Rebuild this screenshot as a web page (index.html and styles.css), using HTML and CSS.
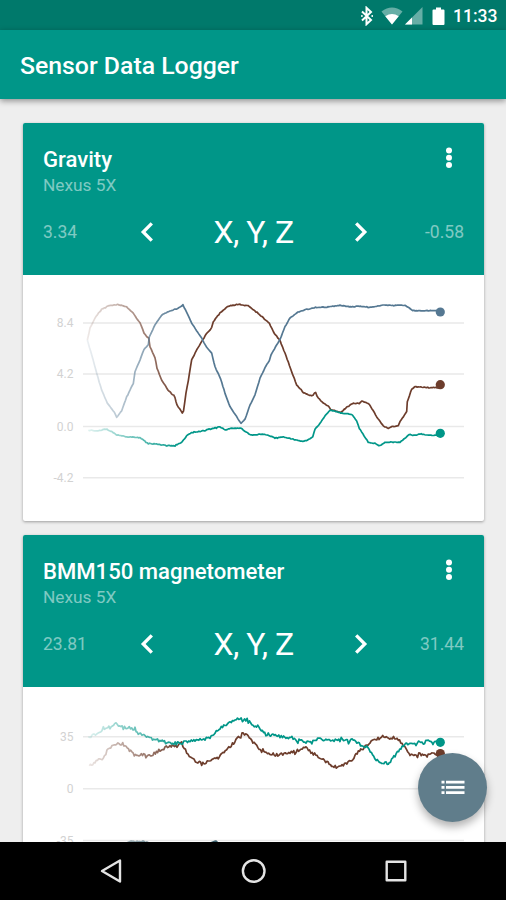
FILE: index.html
```html
<!DOCTYPE html>
<html lang="en">

<head>
  <meta charset="UTF-8">
  <title>Sensor Data Logger</title>
  <link rel="stylesheet" href="styles.css">
</head>

<body>

  <div class="status-bar">
    <svg class="bluetooth" width="14" height="20" viewBox="0 0 14 20">
      <path d="M2 5.5l9 8.5-4.5 4.2V1.8L11 6l-9 8.5M1.2 10h1.4M11.5 10h1.4" fill="none" stroke="#fff" stroke-width="2" />
    </svg>
    <svg class="wifi" width="22" height="18" viewBox="0 0 22 18">
      <path d="M11 17.5L.5 4.5Q11-3.5 21.5 4.5z" fill="#fff" opacity=".4" />
      <path d="M11 17.5L4.3 9.3Q11 4.5 17.7 9.3z" fill="#fff" />
    </svg>
    <svg class="signal" width="18" height="18" viewBox="0 0 18 18">
      <path d="M17.5 0v17.5H0z" fill="#fff" opacity=".4" />
      <path d="M7 10.5v7H0z" fill="#fff" />
    </svg>
    <svg class="battery" width="13" height="19" viewBox="0 0 13 19">
      <path d="M4 .5h5v2h2.5q1 0 1 1V17q0 1-1 1h-10q-1 0-1-1V3.5q0-1 1-1H4z" fill="#fff" />
    </svg>
    <span class="clock">11:33</span>
  </div>

  <header class="app-bar">
    <h1>Sensor Data Logger</h1>
  </header>

  <main>
    <section class="card">
      <div class="card-header">
        <div class="title-row">
          <div>
            <h2>Gravity</h2>
            <p class="device">Nexus 5X</p>
          </div>
          <svg class="more" width="8" height="22" viewBox="0 0 8 22" fill="#fff">
            <circle cx="4" cy="3.5" r="3" />
            <circle cx="4" cy="10.8" r="3" />
            <circle cx="4" cy="18.1" r="3" />
          </svg>
        </div>
        <div class="value-row">
          <span class="value">3.34</span>
          <svg class="arrow" width="14" height="20" viewBox="0 0 14 20">
            <path d="M11.8 1.3L3.2 10l8.6 8.7" />
          </svg>
          <span class="axes">X, Y, Z</span>
          <svg class="arrow" width="14" height="20" viewBox="0 0 14 20">
            <path d="M2.2 1.3l8.6 8.7-8.6 8.7" />
          </svg>
          <span class="value right">-0.58</span>
        </div>
      </div>
      <svg class="chart" id="gravity" width="461" height="246" viewBox="23 275 461 246"></svg>
    </section>

    <section class="card">
      <div class="card-header">
        <div class="title-row">
          <div>
            <h2>BMM150 magnetometer</h2>
            <p class="device">Nexus 5X</p>
          </div>
          <svg class="more" width="8" height="22" viewBox="0 0 8 22" fill="#fff">
            <circle cx="4" cy="3.5" r="3" />
            <circle cx="4" cy="10.8" r="3" />
            <circle cx="4" cy="18.1" r="3" />
          </svg>
        </div>
        <div class="value-row">
          <span class="value">23.81</span>
          <svg class="arrow" width="14" height="20" viewBox="0 0 14 20">
            <path d="M11.8 1.3L3.2 10l8.6 8.7" />
          </svg>
          <span class="axes">X, Y, Z</span>
          <svg class="arrow" width="14" height="20" viewBox="0 0 14 20">
            <path d="M2.2 1.3l8.6 8.7-8.6 8.7" />
          </svg>
          <span class="value right">31.44</span>
        </div>
      </div>
      <svg class="chart" id="magnetometer" width="461" height="246" viewBox="23 687 461 246"></svg>
    </section>

    <button class="fab" aria-label="Sensors">
      <svg width="24" height="15" viewBox="0 0 24 15" fill="#fff">
        <path d="M.5 .7h3v2.8h-3zM5 .7h18.5v2.8H5zM.5 6h3v2.8h-3zM5 6h18.5v2.8H5zM.5 11.3h3v2.8h-3zM5 11.3h18.5v2.8H5z" />
      </svg>
    </button>
  </main>

  <nav class="nav-bar">
    <svg width="24" height="26" viewBox="0 0 24 26">
      <path d="M22 2.5v21L4 13z" />
    </svg>
    <svg width="26" height="26" viewBox="0 0 26 26">
      <circle cx="13.7" cy="13" r="10.8" />
    </svg>
    <svg width="24" height="24" viewBox="0 0 24 24">
      <rect x="2.7" y="2.7" width="18.6" height="18.6" />
    </svg>
  </nav>

  <script src="chart.js"></script>

</body>

</html>
```
FILE: styles.css
```css
* {
  box-sizing: border-box;
}

body {
  margin: 0;
  height: 900px;
  display: flex;
  flex-direction: column;
  overflow: hidden;
  background: #eeeeee;
  color: #fff;
  font-family: Roboto, "Liberation Sans", sans-serif;
}

h1,
h2,
p {
  margin: 0;
}

.status-bar {
  height: 30px;
  flex: none;
  display: flex;
  align-items: center;
  justify-content: flex-end;
  padding: 2px 9px 0 0;
  background: #00796b;
}

.bluetooth {
  margin-right: 7px;
}

.wifi {
  margin-right: 2px;
}

.signal {
  margin-right: 9px;
}

.battery {
  margin-right: 8px;
}

.clock {
  width: 44px;
  font-size: 17.5px;
  font-weight: 500;
  line-height: 28px;
}

.app-bar {
  position: relative;
  height: 69px;
  flex: none;
  padding-left: 20px;
  background: #009688;
  box-shadow: 0 2px 6px rgba(0, 0, 0, 0.4);
  z-index: 1;
}

h1 {
  font-size: 24.8px;
  font-weight: 500;
  line-height: 71px;
}

main {
  position: relative;
  flex: 1;
  min-height: 0;
  overflow: hidden;
  padding: 24px 22px 0 23px;
}

.card {
  height: 398px;
  margin-bottom: 14px;
  border-radius: 2px;
  overflow: hidden;
  background: #fff;
  box-shadow: 0 1px 3px rgba(0, 0, 0, 0.35);
}

.card-header {
  height: 152px;
  padding: 23px 20px 0;
  background: #009688;
}

.title-row {
  display: flex;
  justify-content: space-between;
}

h2 {
  font-size: 22.1px;
  font-weight: 500;
  line-height: 26px;
}

.device {
  font-size: 17.3px;
  line-height: 26px;
  color: rgba(255, 255, 255, 0.5);
}

.more {
  margin: 1px 11px 0 0;
}

.value-row {
  height: 40px;
  display: flex;
  align-items: center;
  margin-top: 14px;
}

.value {
  width: 96.5px;
  font-size: 17.5px;
  color: rgba(255, 255, 255, 0.5);
}

.right {
  text-align: right;
}

.arrow {
  fill: none;
  stroke: #fff;
  stroke-width: 3.3;
}

.axes {
  flex: 1;
  font-size: 32px;
  letter-spacing: -0.5px;
  text-align: center;
}

.chart {
  display: block;
}

.grid-line {
  stroke: #e9e9e9;
  stroke-width: 1.6;
}

.grid-label {
  fill: #d2d2d2;
  font-size: 12px;
  text-anchor: end;
}

.series {
  fill: none;
  stroke-width: 1.7;
  stroke-linejoin: round;
}

.fab {
  position: absolute;
  right: 19px;
  bottom: 20px;
  width: 69px;
  height: 69px;
  display: flex;
  align-items: center;
  justify-content: center;
  padding: 0;
  border: none;
  border-radius: 50%;
  background: #607d8b;
  box-shadow: 0 5px 9px rgba(0, 0, 0, 0.3);
}

.nav-bar {
  height: 58px;
  flex: none;
  display: flex;
  align-items: center;
  justify-content: center;
  gap: 118px;
  background: #000;
}

.nav-bar svg {
  fill: none;
  stroke: #e4e4e4;
  stroke-width: 2.4;
  stroke-linejoin: round;
}
```
FILE: chart.js
```js
const SVG_NS = "http://www.w3.org/2000/svg";

const charts = [
  {
    id: "gravity",
    grid: [[323, "8.4"], [374, "4.2"], [426.5, "0.0"], [477.7, "-4.2"]],
    series: [
      {
        color: "#6d3d2c", noise: 0.7, dot: [440.3, 384.7],
        points: "87.3,340 90,328 95,318 101.7,309 108,306 113,305 120,305 126.7,307 133,313 140,323 144,333 148.7,338 150,347 155,358 157,368 161.7,380 168,390 175,397 177,405 182.3,413 183.5,411 186,393 188.3,380 191.7,360 196.7,350 201.7,341.7 206.7,333.3 211.7,328 213.3,321.7 220,313 228.3,306 240,304.5 248.3,305.7 258.3,313.3 269.3,323.3 273.3,331.7 280,340.7 285,353.3 291.7,371.7 296.7,385 303.3,392.7 311.7,396 315.7,392.7 318.3,398.3 323.3,403.3 328.3,406 330.7,409.3 340.7,412.7 346.7,407.3 353.3,403.3 359.3,403.3 362,400.7 369.3,404.3 376.7,416.7 383.3,426 388.3,428.3 391.7,426.7 398.3,426 400,421.7 406.7,411.7 407.3,401.7 411.7,389 416,386.7 430,387.7 440.7,387.5"
      },
      {
        color: "#557892", noise: 0.6, dot: [440.3, 312],
        points: "87.3,340 91.7,355 96.7,373.3 101.7,390 107.3,403.3 113.3,410.7 116.7,417.3 121.7,410.7 126.7,396.7 133.3,383.3 135,371.7 140,360 144,349.3 148.3,345 149.3,336.7 155,325 161.7,315 170,310.7 176.7,309 183,305.3 186.7,311.7 191.7,323.3 201.7,338.3 206.7,347.3 211.7,353.3 215,366.7 220.7,379.3 225,393.3 230,406.7 236.7,416.7 241,423.3 245,419.3 250,405 255,395 260,378.3 265,367.3 269.3,360.7 271,355 280,339.3 285,326.7 290,318.3 296.7,312.7 306.7,309.3 316.7,307.5 326.7,307 340,305.3 351.7,307 358.3,306 369.3,307.3 381.7,305.3 405,305.3 408.3,307.3 412.7,310.7 440,310.7"
      },
      {
        color: "#009688", noise: 0.7, dot: [440.3, 433.3],
        points: "88.3,430.3 98.3,430.7 106,429 111.7,431.7 116.7,435 126.7,436.7 140,437.7 148.3,443.3 163.3,445 175,446 182.3,441.7 186.7,435.7 191.7,432.7 200,431.3 206.7,429.7 220,426.7 225,430 231.7,428.3 241,428.3 250,434.7 255,435 263.3,433.7 275,438 283.3,437 296.7,440 304,441.3 310,439 312.7,436.7 315,429.3 320,423.3 325,416 330,410 341.7,413 351.7,414.3 356.7,420.7 359.3,428.3 368.3,442.3 375,443.3 380,445.7 385,442.3 400,442.3 409.3,434.3 415,435.3 420,433.7 428.3,435.3 440,435.3"
      }
    ]
  },
  {
    id: "magnetometer",
    grid: [[736.7, "35"], [788.7, "0"], [840.5, "-35"]],
    series: [
      {
        color: "#6d3d2c", noise: 3, dot: [440.3, 753.5],
        points: "89.3,765.7 95,762.3 103.3,757.7 108.3,749 116.7,743.3 122.7,744 128.3,749.3 136.7,755 151.7,755 160,750 170,746.7 181.7,743.3 186.7,752.7 191.7,758.3 201.7,764 208.3,761.7 218.3,758 230,746.7 238.3,737.7 245.7,734.3 251.7,740.7 261.7,751.3 276.7,755 290,752.7 306,747.7 313.3,754.3 323.3,760 334,767.7 343.3,765 351.7,760.7 358.3,751 366.7,746 373.3,740 385,736.7 398.3,739.3 403.3,745.7 410,754 420,754.3 440,753.7"
      },
      {
        color: "#009688", noise: 3, dot: [440.3, 742.3],
        points: "88.3,736.7 96.7,734.3 103.3,729.3 110,726 116,723.3 123.3,727.7 131.7,727.7 138.3,733.3 150,738.3 160,740.7 166.7,742.7 180,743.3 190,740.7 200,740 210,737.7 220,728.3 230,722.7 240,717.7 248.3,722.3 260,729 268.3,734.3 280,736.7 296.7,740 308.3,742.7 320,739.3 340,740.3 353.3,740.7 359.3,744 366.7,746.7 375,758.3 381.7,763.3 388.3,763.3 395,756 403.3,746 410,742.3 423.3,742.7 428.3,740.7 440,742.3"
      },
      {
        color: "#3f6370", noise: 1, dot: [440.3, 870],
        points: "88,862 110,852 130,841.5 143,841.5 149,843 170,860 190,862 211,842.5 216,841 220,846 245,862 330,868 440,870"
      }
    ]
  }
];

// fixed seed, so the jitter is the same on every load
let seed = 7;
function random() {
  seed = (seed * 16807) % 2147483647;
  return seed / 2147483647 - 0.5;
}

function add(parent, tag, attrs) {
  const el = document.createElementNS(SVG_NS, tag);
  for (const name in attrs) {
    el.setAttribute(name, attrs[name]);
  }
  parent.appendChild(el);
  return el;
}

// walks between the key points in short steps and adds sensor noise
function buildPath(text, noise) {
  const points = text.split(" ").map(p => p.split(",").map(Number));
  let path = "M" + points[0];
  for (let i = 1; i < points.length; i++) {
    const [x0, y0] = points[i - 1];
    const [x1, y1] = points[i];
    const steps = Math.max(1, Math.round((x1 - x0) / 1.2));
    for (let s = 1; s <= steps; s++) {
      const x = x0 + (x1 - x0) * s / steps;
      const spike = random() > 0.38 ? 2.2 : 1;
      const y = y0 + (y1 - y0) * s / steps + random() * noise * spike;
      path += "L" + x.toFixed(1) + " " + y.toFixed(1);
    }
  }
  return path;
}

charts.forEach(chart => {
  const svg = document.getElementById(chart.id);

  chart.grid.forEach(([y, label]) => {
    add(svg, "line", { class: "grid-line", x1: 83, x2: 464, y1: y, y2: y });
    add(svg, "text", { class: "grid-label", x: 73.5, y: y + 4 }).textContent = label;
  });

  chart.series.forEach((series, i) => {
    // old samples fade out to the left
    const id = chart.id + "-fade-" + i;
    const fade = add(svg, "linearGradient", { id: id, gradientUnits: "userSpaceOnUse", x1: 86, y1: 0, x2: 180, y2: 0 });
    add(fade, "stop", { offset: 0, "stop-color": series.color, "stop-opacity": 0.1 });
    add(fade, "stop", { offset: 1, "stop-color": series.color });

    add(svg, "path", { class: "series", d: buildPath(series.points, series.noise), stroke: "url(#" + id + ")" });
    add(svg, "circle", { cx: series.dot[0], cy: series.dot[1], r: 4.6, fill: series.color });
  });
});
```
